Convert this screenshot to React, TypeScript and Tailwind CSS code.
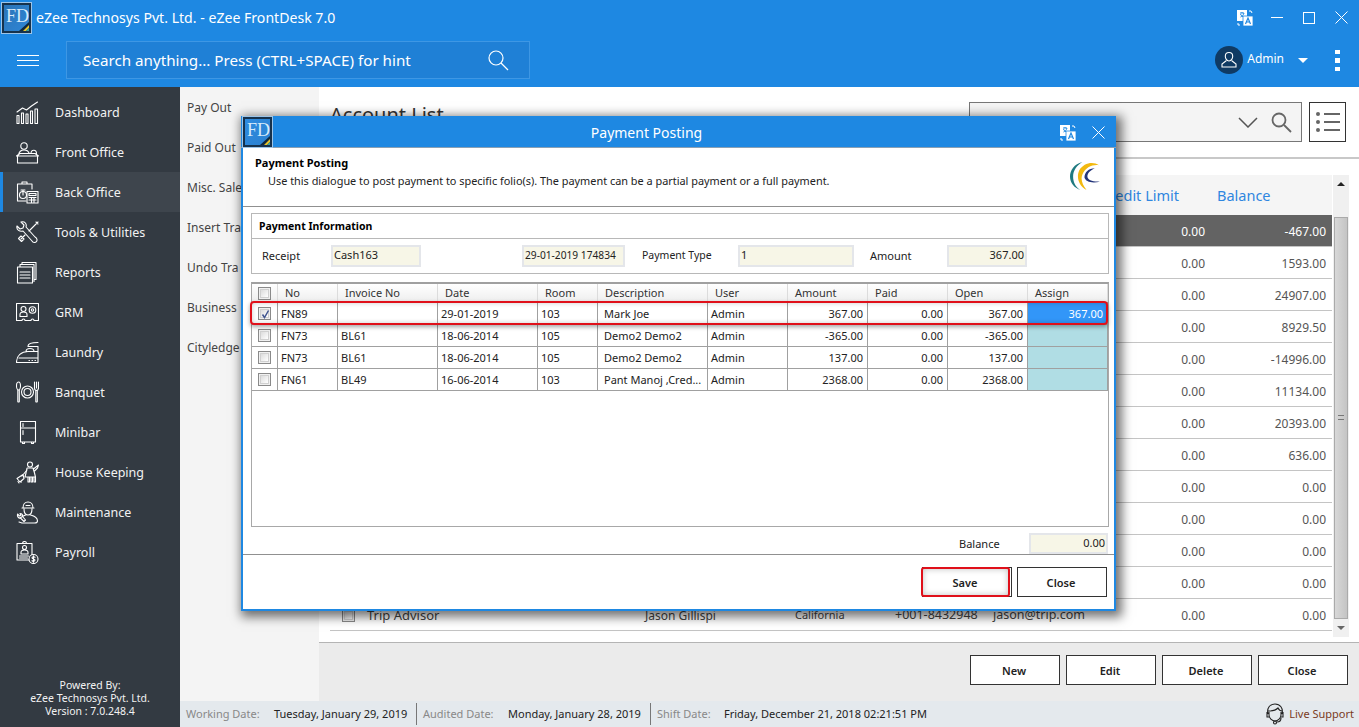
import type { ReactNode } from "react";

const white = { fill: "none", stroke: "#fff", strokeWidth: 1.1 };

function Ico({ children }: { children: ReactNode }) {
  return (
    <svg width="23" height="23" viewBox="0 0 23 23" {...white} strokeLinecap="round" strokeLinejoin="round" className="shrink-0">
      {children}
    </svg>
  );
}

const navIcons: Record<string, ReactNode> = {
  Dashboard: (
    <Ico>
      <path d="M1 14.500h2v8H1zM5.500 12h2v10.500h-2zM10 13h2v9.500h-2zM14.500 10h2v12.500h-2zM19 8h2.500v14.500H19z" />
      <path d="M1 11l5.500-4 4 2 5-4 6-4" />
    </Ico>
  ),
  "Front Office": (
    <Ico>
      <circle cx="8" cy="5" r="3.200" />
      <path d="M2.500 14c.5-3 2.500-5 5.500-5s4.500 1.500 5 3M.5 15L4 12.500h15l3.500 2.500zM1.500 15v7h20v-7zM15 12.500c0-2 1.500-3.300 2.800-3.300s2.700 1.300 2.700 3.300" />
    </Ico>
  ),
  "Back Office": (
    <Ico>
      <path d="M16 8V3H1.500v17H10M6 3V1h5v2" />
      <circle cx="7" cy="14" r="3.500" />
      <path d="M7 14V9M5 9h4" />
      <path d="M11 10.500h11V22H11zM13 12.500h7v2h-7zM13 16.500h7M13 19h7M15.500 16.500V21M18 16.500V21" />
    </Ico>
  ),
  "Tools & Utilities": (
    <Ico>
      <path d="M1 5l3 3 3-1 1-3-3-3c4-1 6 2 5 5l9 10c2 1 2.500 3 1.500 4.500s-3.500 1.500-4.500-.5L7 10C4 11 0 9 1 5z" />
      <path d="M22 1l-9 9M9 14l-4 4M2.500 17.500l3 3L8 18l-3-3zM20 1l2 2" />
    </Ico>
  ),
  Reports: (
    <Ico>
      <path d="M6 3.500V1.500h14v17h-2M4 5.500V3.500h14v17M1.500 6h15v16h-15zM4 11h10M4 14h10M4 17h10" />
    </Ico>
  ),
  GRM: (
    <Ico>
      <path d="M.5 2.500h22v17h-4.500a1.500 1.500 0 0 0-3 0h-6a1.500 1.500 0 0 0-3 0H.5z" />
      <circle cx="7.500" cy="8" r="2.500" />
      <path d="M4 15.500v-2c0-1.500 1.500-2.500 3.500-2.500s3.500 1 3.500 2.500v2zM4 15.500h7" />
      <circle cx="16.500" cy="9" r="3.300" />
      <circle cx="16.500" cy="9" r="1.200" />
    </Ico>
  ),
  Laundry: (
    <Ico>
      <path d="M22 1.500c-5 0-10 1-10 3.500M12 5.500h10v16H.5c0-7 5-11 11.500-11h10M10 10.500c0-2.500 1.500-3 4-3s4 1 4 3M3 17h19M13 19.500h.5M16 19.500h.5M19 19.500h.5" />
    </Ico>
  ),
  Banquet: (
    <Ico>
      <path d="M2.500 1c1.500 0 2 2 2 4s-1 4-2 4-2-2-2-4 .5-4 2-4zM1.800 9v11.500a.8.8 0 0 0 1.500 0V9" />
      <circle cx="11.500" cy="11" r="6" />
      <circle cx="11.500" cy="11" r="3.500" />
      <path d="M18.500 1v6c0 1.500 1 2.500 2 2.500s2-1 2-2.500V1M20.500 1v6M19.800 9.500v11a.8.8 0 0 0 1.500 0v-11" />
    </Ico>
  ),
  Minibar: (
    <Ico>
      <path d="M4.500.5h15v20.500h-15zM4.500 7h15M7 2.500v3M7 9.500v4M6.500 21v1.500h2V21M15.500 21v1.500h2V21" />
    </Ico>
  ),
  "House Keeping": (
    <Ico>
      <circle cx="14" cy="3.500" r="2.500" />
      <path d="M11 7h6l1.500 5 1 4H9l1-4zM12 16v5h1.500v-5M15 16v5h1.500v-5M18 16v5h1.500v-5M17.500 8l5-4-1 3-3 3" />
      <path d="M11 9l-5 6M7 13.500l-6 4 3 3.500 4-3.500z" />
      <path d="M2 20.500l1 1.500M5 21h.5" />
    </Ico>
  ),
  Maintenance: (
    <Ico>
      <path d="M7 7c0-3.500 2-6 5-6s5 2.500 5 6zM10 4.500h4M6 7h12M8 8c0 4 2 6 4 6s4-2 4-6" />
      <path d="M9.500 14C7 15 5.500 16 4 17M14.500 14c4 1 7 3 7 6 0 1.500-1 2-3 2H6l-3-1" />
      <path d="M1.500 13l2 2 1.500-.5-1-2c2 0 3 1.500 2.500 3l3 3.500-1.500 1.500-3.500-3.500c-2 .5-3.500-1.500-3-4z" />
    </Ico>
  ),
  Payroll: (
    <Ico>
      <path d="M14 19H1V2.500h15V14M6.500 2.500a2 2 0 0 1 4 0" />
      <circle cx="8.500" cy="6.500" r="2" />
      <path d="M5 13v-1.500C5 10 6.500 9 8.500 9s3.500 1 3.500 2.500V13zM3.500 15h9M3.500 17h8" />
      <circle cx="17.500" cy="18" r="4.500" fill="#333a42" />
      <path d="M19 16.300c-.5-.8-3-1-3 .5s3 .8 3 2.300-2.500 1.300-3 .5M17.500 14.800v6.400" />
    </Ico>
  ),
};

const navItems = Object.keys(navIcons);
// the dialog covers the rest of these labels in the screen
const subItems = ["Pay Out", "Paid Out", "Misc. Sale", "Insert Tra", "Undo Tra", "Business", "Cityledge"];
const balances = ["-467.00", "1593.00", "24907.00", "8929.50", "-14996.00", "11134.00", "20393.00", "636.00", "0.00", "0.00", "0.00", "0.00", "0.00"];

const postings = [
  { no: "FN89", inv: "", date: "29-01-2019", room: "103", desc: "Mark Joe", amount: "367.00", open: "367.00", assign: "367.00" },
  { no: "FN73", inv: "BL61", date: "18-06-2014", room: "105", desc: "Demo2 Demo2", amount: "-365.00", open: "-365.00", assign: "" },
  { no: "FN73", inv: "BL61", date: "18-06-2014", room: "105", desc: "Demo2 Demo2", amount: "137.00", open: "137.00", assign: "" },
  { no: "FN61", inv: "BL49", date: "16-06-2014", room: "103", desc: "Pant Manoj ,Cred...", amount: "2368.00", open: "2368.00", assign: "" },
];

function Logo({ faded }: { faded?: boolean }) {
  return (
    <div className="relative w-[31px] h-[32px] shrink-0 border border-[#9cc4e8] bg-[#16324d] p-[2px]">
      <div className={`relative w-full h-full overflow-hidden bg-gradient-to-br ${faded ? "from-[#2f8ce0] to-[#2a80d0]" : "from-[#2a74b8] to-[#2f86d6]"}`}>
        <span className="absolute left-[2px] top-[1px] text-[18px] leading-[20px] text-[#d8ebfa] font-['Liberation_Serif',serif]">FD</span>
        <svg width="25" height="26" viewBox="0 0 25 26" className="absolute left-0 top-0">
          <path d="M25 17L15 26h10z" fill="#10293f" />
          <path d="M25 20l-6 6h3l3-3z" fill="#e8c32a" />
          <path d="M25 23l-3 3h3z" fill="#39a0a0" />
        </svg>
      </div>
    </div>
  );
}

function TranslateIcon() {
  return (
    <svg width="16" height="16" viewBox="0 0 16 16" className="shrink-0">
      <path d="M0 0h10v11H0z" fill="#fff" />
      <path d="M3 3h4M5 2v1M3.500 7c1.500-.5 3-2 3.500-4M3.500 4c.5 1.500 2 3 3.500 3" stroke="#1e88e2" strokeWidth="1" fill="none" />
      <path d="M6 6h10v10H6z" fill="#fff" stroke="#1e88e2" strokeWidth=".8" />
      <path d="M8.500 14l2.500-6 2.500 6M9.500 12h3" stroke="#1e88e2" strokeWidth="1.200" fill="none" />
      <path d="M12 1h2l1 2M1 13v2h2" stroke="#fff" strokeWidth="1" fill="none" />
    </svg>
  );
}

function CloseX({ size }: { size: number }) {
  return (
    <svg width={size} height={size} viewBox="0 0 13 13" className="shrink-0">
      <path d="M.5.5l12 12M12.500.5l-12 12" stroke="#fff" strokeWidth="1" />
    </svg>
  );
}

function Check({ checked }: { checked?: boolean }) {
  return (
    <div className="w-[13px] h-[13px] border border-[#8a8a8a] bg-[#f0f0f0] p-[1px] shrink-0">
      <div className="w-full h-full border border-[#d0d0d0] bg-gradient-to-br from-[#dcdcdc] to-white">
        {checked && (
          <svg width="9" height="9" viewBox="0 0 9 9">
            <path d="M1.500 4.500l2 3 4-7" stroke="#41558f" strokeWidth="1.500" fill="none" />
          </svg>
        )}
      </div>
    </div>
  );
}

function Btn({ label }: { label: string }) {
  return (
    <button className="w-[90px] h-[30px] border border-[#333] bg-white pt-[2px] pr-[2px] text-[11px] font-semibold text-[#222]">
      {label}
    </button>
  );
}

function Field({ value, className }: { value: string; className: string }) {
  return (
    <div className={`border-2 border-[#e4e6ea] bg-[#f7f6e7] text-[#222] ${className}`}>
      {value}
    </div>
  );
}

function PaymentDialog() {
  const cols = "grid grid-cols-[26px_60px_100px_100px_60px_110px_80px_80px_80px_80px_80px]";
  const heads = ["No", "Invoice No", "Date", "Room", "Description", "User", "Amount", "Paid", "Open", "Assign"];
  return (
    <div className="absolute left-[241px] top-[116px] w-[875px] h-[495px] flex flex-col border-x-2 border-b-2 border-[#1e88e2] bg-white shadow-[3px_3px_10px_3px_rgba(0,0,0,0.55)] text-[#222]">
      <div className="relative -mx-[2px] h-[32px] shrink-0 flex items-center justify-center pr-[64px] pt-[2px] bg-[#1e88e2] border-b border-[#8aa0b4]">
        <div className="absolute left-[1px] top-0">
          <Logo faded />
        </div>
        <span className="text-[14px] text-white">Payment Posting</span>
        <div className="absolute left-[819px] top-[9px]">
          <TranslateIcon />
        </div>
        <div className="absolute left-[851px] top-[10px]">
          <CloseX size={13} />
        </div>
      </div>

      <div className="relative h-[59px] shrink-0 border-b border-[#909090] pl-[12px] pt-[7px]">
        <div className="text-[11px] leading-[16px] font-bold text-black">Payment Posting</div>
        <div className="pl-[13px] pt-[2px] text-[10.900px] leading-[16px] text-[#222]">
          Use this dialogue to post payment to specific folio(s). The payment can be a partial payment or a full payment.
        </div>
        <svg width="31" height="28" viewBox="0 0 30 27" className="absolute right-[13px] top-[14px]">
          <path d="M12 0C4 2 0 8 0 14c0 6 4 11 10 13-5-3-7-8-7-13C3 8 7 3 12 0z" fill="#1f7a80" />
          <path d="M28 3C22-1 13 1 9 8c-3 6-1 15 7 19-4-5-6-10-4-15C15 5 22 2 28 3z" fill="#f2b90f" />
          <path d="M24 6c-6 0-10 4-10 9 1 4 7 6 15 4-6 0-11-1-12-4-1-4 3-7 7-9z" fill="#24357a" />
        </svg>
      </div>

      <div className="mt-[6px] ml-[8px] w-[858px] h-[61px] shrink-0 border border-[#b8b8b8] flex flex-col">
        <div className="h-[25px] border-b border-[#b8b8b8] pl-[7px] text-[10.500px] leading-[24px] font-bold text-black">Payment Information</div>
        <div className="flex-1 flex items-center text-[11px]">
          <span className="w-[79px] shrink-0 pl-[10px]">Receipt</span>
          <Field value="Cash163" className="w-[90px] h-[22px] pl-[1px] text-[11px] leading-[16px]" />
          <div className="w-[101px]" />
          <Field value="29-01-2019 174834" className="w-[103px] h-[22px] pl-[1px] whitespace-nowrap overflow-hidden text-[10.200px] leading-[16px]" />
          <span className="w-[113px] shrink-0 pl-[17px] text-[10.500px] whitespace-nowrap">Payment Type</span>
          <Field value="1" className="w-[116px] h-[22px] pl-[1px] text-[11px] leading-[16px]" />
          <span className="w-[93px] shrink-0 pl-[16px]">Amount</span>
          <Field value="367.00" className="w-[80px] h-[22px] text-right pr-[1px] text-[11px] leading-[16px]" />
        </div>
      </div>

      <div className="relative mt-[8px] ml-[8px] w-[858px] h-[245px] shrink-0 border border-[#a8a8a8] border-t-2 border-t-[#a0a0a0] text-[11px]">
        <div className={`${cols} h-[19px] bg-gradient-to-b from-white to-[#eeeeee] border-b border-[#999]`}>
          <div className="flex items-center justify-center border-r border-[#dcdcdc]">
            <Check />
          </div>
          {heads.map((h, i) => (
            <div key={i} className="pl-[7px] leading-[18px] border-r border-[#dcdcdc] text-[#333] overflow-hidden whitespace-nowrap">{h}</div>
          ))}
        </div>
        {postings.map((p, i) => (
          <div key={i} className={`${cols} h-[22px] border-b border-[#a0a0a0] leading-[21px] whitespace-nowrap`}>
            <div className="flex items-center justify-center border-r border-[#a0a0a0]">
              <Check checked={i === 0} />
            </div>
            <div className="pl-[3px] border-r border-[#a0a0a0]">{p.no}</div>
            <div className="pl-[3px] border-r border-[#a0a0a0]">{p.inv}</div>
            <div className="pl-[3px] border-r border-[#a0a0a0]">{p.date}</div>
            <div className="pl-[3px] border-r border-[#a0a0a0]">{p.room}</div>
            <div className="pl-[6px] border-r border-[#a0a0a0] overflow-hidden">{p.desc}</div>
            <div className="pl-[3px] border-r border-[#a0a0a0]">Admin</div>
            <div className="pr-[4px] text-right border-r border-[#a0a0a0]">{p.amount}</div>
            <div className="pr-[4px] text-right border-r border-[#a0a0a0]">0.00</div>
            <div className="pr-[4px] text-right border-r border-[#a0a0a0]">{p.open}</div>
            <div className={`pr-[4px] text-right border-r border-[#a0a0a0] ${i === 0 ? "bg-[#3296f8] text-white" : "bg-[#b0dde4]"}`}>{p.assign}</div>
          </div>
        ))}
        <div className="absolute -left-[2px] top-[17px] w-[858px] h-[24px] border-2 border-[#e0101a] rounded-[4px] shadow-[0_2px_4px_rgba(0,0,0,0.35),inset_0_0_5px_rgba(0,0,0,0.2)]" />
      </div>

      <div className="h-[28px] shrink-0 border-b border-[#909090] flex items-start text-[11px]">
        <span className="pl-[716px] w-[786px] shrink-0 pt-[9px] leading-[16px]">Balance</span>
        <Field value="0.00" className="w-[79px] h-[21px] mt-[6px] text-right pr-[1px] text-[11px] leading-[16px]" />
      </div>

      <div className="relative flex-1 flex justify-end items-start gap-[5px] pr-[7px] pt-[12px]">
        <div className="relative">
          <button className="w-[90px] h-[30px] border border-[#333] bg-white pr-[4px] pt-[2px] text-[11px] font-semibold text-[#222]">Save</button>
          <div className="absolute -left-[1px] top-0 w-[89px] h-[30px] border-2 border-[#e0101a] rounded-[3px] shadow-[inset_0_0_6px_rgba(0,0,0,0.25)]" />
        </div>
        <Btn label="Close" />
      </div>
    </div>
  );
}

function AccountList() {
  const cols = "grid grid-cols-[37px_278px_150px_100px_98px_142px_70px_127px]";
  return (
    <div className="flex-1 min-h-0 flex pl-[11px] pt-[16px] pb-[5px]">
      <div className="w-[1002px]">
        <div className={`${cols} h-[40px] bg-[#f5f5f5] items-center pt-[2px] text-[14.500px] text-[#2f86e0]`}>
          <div className="col-span-6" />
          <div className="col-span-1 whitespace-nowrap text-right pr-[26px] -ml-[60px]">Credit Limit</div>
          <div className="pl-[12px]">Balance</div>
        </div>
        {balances.map((b, i) => {
          const last = i === balances.length - 1;
          return (
            <div key={i} className={`${cols} h-[32px] items-center pt-[2px] text-[12px] border-b border-[#c4c4c4] ${i === 0 ? "bg-[#636363] text-white" : "text-[#555]"}`}>
              <div className="pl-[12px]">{last && <Check />}</div>
              <div className="text-[13px] text-[#444]">{last ? "Trip Advisor" : ""}</div>
              <div className="text-[#444]">{last ? "Jason Gillispi" : ""}</div>
              <div className="text-[11px] text-[#444]">{last ? "California" : ""}</div>
              <div className="text-[12.500px] text-[#444]">{last ? "+001-8432948" : ""}</div>
              <div className="text-[12.500px] text-[#444]">{last ? "jason@trip.com" : ""}</div>
              <div className="text-right">0.00</div>
              <div className="text-right pr-[6px]">{b}</div>
            </div>
          );
        })}
      </div>
      <div className="relative w-[16px] ml-[1px] bg-[#f0f0f0] flex flex-col items-center">
        <div className="h-[18px] flex items-center">
          <div className="w-0 h-0 border-x-[4px] border-x-transparent border-b-[4px] border-b-[#222]" />
        </div>
        <div className="mt-[24px] w-[14px] h-[403px] border border-[#aaa] bg-gradient-to-r from-[#d8d8d8] to-[#c4c4c4] flex items-center justify-center">
          <div className="w-[6px] h-[5px] border-y border-[#777]" />
        </div>
        <div className="mt-auto h-[18px] flex items-center">
          <div className="w-0 h-0 border-x-[4px] border-x-transparent border-t-[4px] border-t-[#666]" />
        </div>
      </div>
    </div>
  );
}

export default function App() {
  return (
    <div className="relative w-[1359px] h-[727px] overflow-hidden flex flex-col bg-white font-['Noto_Sans',sans-serif]">
      <header className="h-[87px] shrink-0 bg-[#1e88e2] text-white flex flex-col">
        <div className="h-[35px] flex items-center pl-[1px]">
          <Logo />
          <span className="pl-[4px] text-[14.100px] whitespace-nowrap">eZee Technosys Pvt. Ltd. - eZee FrontDesk 7.0</span>
          <div className="ml-auto flex items-center">
            <TranslateIcon />
            <div className="ml-[18px] w-[12px] h-px bg-white" />
            <div className="ml-[20px] w-[12px] h-[12px] border border-white" />
            <div className="ml-[20px] mr-[11px]">
              <CloseX size={13} />
            </div>
          </div>
        </div>
        <div className="flex-1 flex items-center pb-[2px]">
          <div className="ml-[17px] w-[22px] flex flex-col gap-[4px]">
            <div className="h-px bg-white" />
            <div className="h-px bg-white" />
            <div className="h-px bg-white" />
          </div>
          <div className="ml-[27px] w-[464px] h-[38px] border border-[#3e97e4] bg-[#1f80d6] flex items-center pl-[16px] pr-[20px]">
            <span className="text-[15.200px] whitespace-nowrap">Search anything... Press (CTRL+SPACE) for hint</span>
            <svg width="22" height="22" viewBox="0 0 22 22" fill="none" stroke="#fff" strokeWidth="1.200" className="ml-auto">
              <circle cx="9" cy="9" r="7" />
              <path d="M14 14l7 7" />
            </svg>
          </div>
          <div className="ml-auto w-[28px] h-[28px] rounded-full bg-[#0f3a63] flex items-center justify-center">
            <svg width="18" height="18" viewBox="0 0 18 18" fill="none" stroke="#fff" strokeWidth="1.100">
              <path d="M9 1.500c2.300 0 3.700 1.700 3.700 3.800S11.300 10 9 10 5.300 7.400 5.300 5.300 6.700 1.500 9 1.500z" />
              <path d="M6.500 9.500L2 13v3h14v-3l-4.500-3.500" />
            </svg>
          </div>
          <span className="pl-[4px] pb-[3px] text-[12px]">Admin</span>
          <div className="ml-[14px] w-0 h-0 border-x-[5px] border-x-transparent border-t-[5px] border-t-white" />
          <div className="ml-[27px] mr-[19px] flex flex-col gap-[4px]">
            <div className="w-[5px] h-[4px] bg-white" />
            <div className="w-[5px] h-[5px] bg-white" />
            <div className="w-[5px] h-[4px] bg-white" />
          </div>
        </div>
      </header>

      <div className="flex-1 min-h-0 flex">
        <aside className="w-[180px] shrink-0 bg-[#333a42] pt-[5px] flex flex-col">
          {navItems.map((n) => (
            <div key={n} className={`h-[40px] flex items-center gap-[16px] border-l-[3px] pl-[13px] text-[12.500px] text-[#f2f2f2] ${n === "Back Office" ? "border-[#1e88e2] bg-[#3e454d]" : "border-transparent"}`}>
              {navIcons[n]}
              <span className="pt-[2px]">{n}</span>
            </div>
          ))}
          <div className="mt-auto pb-[9px] text-center text-[10.500px] leading-[13px] text-[#f2f2f2]">
            <div>Powered By:</div>
            <div>eZee Technosys Pvt. Ltd.</div>
            <div>Version : 7.0.248.4</div>
          </div>
        </aside>

        <div className="flex-1 min-w-0 flex flex-col">
          <div className="flex-1 min-h-0 flex">
            <nav className="w-[139px] shrink-0 bg-[#f4f4f4] pl-[7px] pt-[1px] text-[12px] text-[#444] whitespace-nowrap overflow-hidden">
              {subItems.map((s) => (
                <div key={s} className="h-[40px] leading-[40px]">{s}</div>
              ))}
            </nav>
            <main className="flex-1 min-w-0 flex flex-col">
              <div className="h-[72px] shrink-0 border-b-2 border-[#c8c8c8] flex items-start pt-[15px] pl-[11px]">
                <span className="text-[20px] leading-[26px] text-[#333]">Account List</span>
                <div className="ml-auto w-[333px] h-[40px] border border-[#777] bg-[#f4f4f4] flex items-center justify-end gap-[13px] pr-[9px]">
                  <svg width="20" height="11" viewBox="0 0 20 11" fill="none" stroke="#555" strokeWidth="1.500">
                    <path d="M1 1l9 9 9-9" />
                  </svg>
                  <svg width="21" height="21" viewBox="0 0 21 21" fill="none" stroke="#666" strokeWidth="1.800">
                    <circle cx="8" cy="8" r="6.500" />
                    <path d="M13 13l7 7" />
                  </svg>
                </div>
                <div className="ml-[7px] mr-[13px] w-[37px] h-[40px] border border-[#333] flex items-center justify-center">
                  <svg width="24" height="20" viewBox="0 0 24 20" fill="#666">
                    <circle cx="2" cy="2" r="2" />
                    <circle cx="2" cy="10" r="2" />
                    <circle cx="2" cy="18" r="2" />
                    <path d="M8 1h16v2H8zM8 9h16v2H8zM8 17h16v2H8z" />
                  </svg>
                </div>
              </div>
              <AccountList />
              <div className="h-[59px] shrink-0 border-t border-[#b4b4b4] bg-[#ebebeb] flex justify-end items-start gap-[6px] pt-[12px] pr-[11px]">
                <Btn label="New" />
                <Btn label="Edit" />
                <Btn label="Delete" />
                <Btn label="Close" />
              </div>
            </main>
          </div>

          <footer className="h-[26px] shrink-0 bg-[#e4e9ed] flex items-center text-[11px] text-[#222] whitespace-nowrap">
            <div className="w-[237px] shrink-0 h-[22px] flex items-center pl-[6px] border-r border-[#777]">
              <span className="w-[88px] shrink-0 text-[#888]">Working Date:</span>
              <span>Tuesday, January 29, 2019</span>
            </div>
            <div className="w-[234px] shrink-0 h-[22px] flex items-center pl-[6px] border-r border-[#777]">
              <span className="w-[85px] shrink-0 text-[#888]">Audited Date:</span>
              <span>Monday, January 28, 2019</span>
            </div>
            <div className="flex items-center pl-[6px]">
              <span className="w-[67px] shrink-0 text-[#888]">Shift Date:</span>
              <span>Friday, December 21, 2018 02:21:51 PM</span>
            </div>
            <div className="ml-auto flex items-center gap-[4px] pr-[5px]">
              <svg width="20" height="22" viewBox="0 0 20 22" fill="none" stroke="#222" strokeWidth="1.100">
                <path d="M3 11C1.500 5 5 1 10 1s8.500 4 7 10M3 8c4 0 8-1 10-3 1 2 2 3 4 3M4 9v3c0 3 3 6 6 6s6-3 6-6V9M2 9v5h2M18 9v5h-2M16 15c0 3-2 4-4 4" />
                <circle cx="10" cy="19.500" r="1.500" />
              </svg>
              <span className="text-[#7a3b1e]">Live Support</span>
            </div>
          </footer>
        </div>
      </div>

      <PaymentDialog />
    </div>
  );
}
